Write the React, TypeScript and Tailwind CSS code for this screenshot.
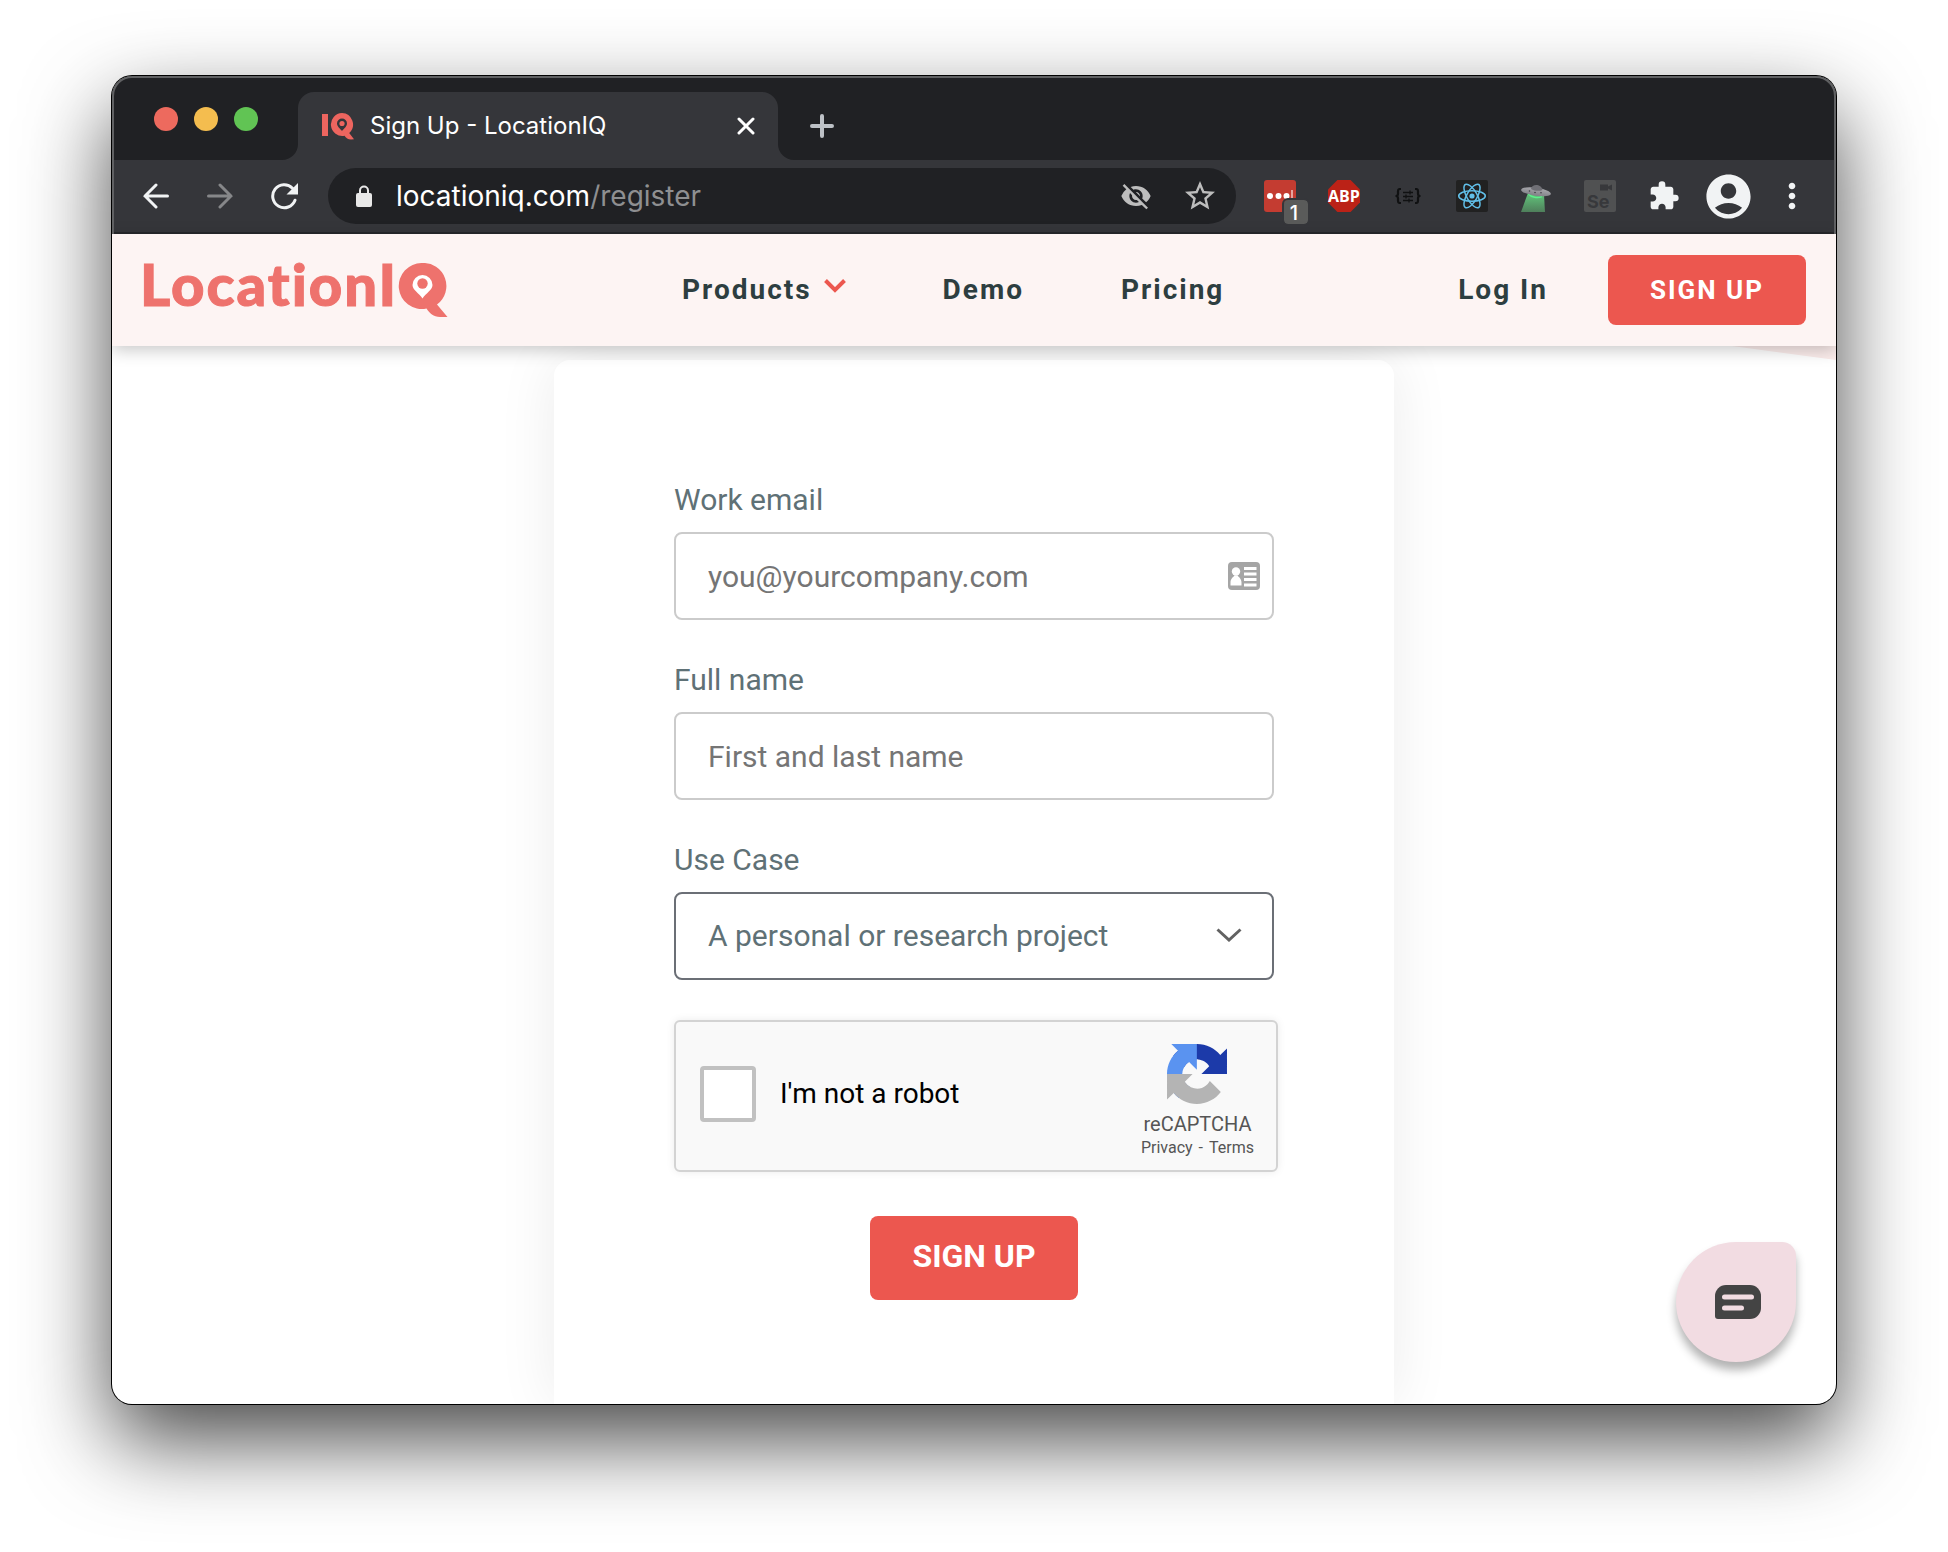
import React from "react";
import {
  MdVisibilityOff,
  MdStarBorder,
  MdExtension,
  MdAccountCircle,
  MdMoreVert,
} from "react-icons/md";

function TrafficLights() {
  return (
    <div className="flex gap-4 pl-[42px] pt-[31px]">
      <button aria-label="Close window" className="h-6 w-6 rounded-full bg-[#ed6a5e]" />
      <button aria-label="Minimize window" className="h-6 w-6 rounded-full bg-[#f4bd4f]" />
      <button aria-label="Zoom window" className="h-6 w-6 rounded-full bg-[#61c454]" />
    </div>
  );
}

function IQMark() {
  return (
    <svg viewBox="0 0 32 27" className="h-[27px] w-8 shrink-0" aria-hidden="true">
      <rect x="0" y="1" width="6" height="22" fill="#ed655f" />
      <path
        fill="#ed655f"
        fillRule="evenodd"
        d="M20 0a11.500 11.500 0 1 0 2.500 22.800c1.500 2.200 3.500 3.700 6.500 3.700l3-.3-4.800-6.200A11.500 11.500 0 0 0 20 0Zm0 5.600a5 5 0 0 1 5 5c0 3-3 5-5 7.400-2-2.400-5-4.400-5-7.400a5 5 0 0 1 5-5Z"
      />
      <circle cx="20" cy="10.500" r="2.600" fill="#ed655f" />
    </svg>
  );
}

function TabFoot({ side }: { side: "left" | "right" }) {
  return (
    <svg
      viewBox="0 0 16 16"
      aria-hidden="true"
      className={
        side === "left"
          ? "absolute bottom-0 right-full h-4 w-4"
          : "absolute bottom-0 left-full h-4 w-4 -scale-x-100"
      }
    >
      <path d="M16 0v16H0A16 16 0 0 0 16 0Z" fill="#35363a" />
    </svg>
  );
}

function TabStrip() {
  return (
    <div className="flex h-[84px] bg-[#202124]">
      <TrafficLights />
      <div className="relative ml-10 mt-4 flex w-[480px] items-center rounded-t-2xl bg-[#35363a] pl-6 pr-5">
        <TabFoot side="left" />
        <IQMark />
        <span className="ml-4 font-[Inter] text-2xl text-white">Sign Up - LocationIQ</span>
        <button aria-label="Close tab" className="ml-auto flex h-6 w-6 items-center justify-center">
          <svg viewBox="0 0 18 18" className="h-[18px] w-[18px]" aria-hidden="true">
            <path d="M2 2l14 14M16 2L2 16" stroke="#fff" strokeWidth="3" strokeLinecap="round" />
          </svg>
        </button>
        <TabFoot side="right" />
      </div>
      <button aria-label="New tab" className="ml-8 mt-[38px] h-6 w-6">
        <svg viewBox="0 0 24 24" aria-hidden="true">
          <path d="M12 2v20M2 12h20" stroke="#bdc1c6" strokeWidth="4" strokeLinecap="round" />
        </svg>
      </button>
    </div>
  );
}

function ToolButton({ label, children }: { label: string; children: React.ReactNode }) {
  return (
    <button aria-label={label} className="relative flex h-14 w-16 shrink-0 items-center justify-center">
      {children}
    </button>
  );
}

function UfoIcon() {
  return (
    <svg viewBox="0 0 32 32" className="h-8 w-8" aria-hidden="true">
      <defs>
        <linearGradient id="beam" x1="0" y1="0" x2="0" y2="1">
          <stop offset="0" stopColor="#62c77c" />
          <stop offset="1" stopColor="#4f7f5b" />
        </linearGradient>
        <linearGradient id="hull" x1="0" y1="0" x2="0" y2="1">
          <stop offset="0" stopColor="#a9a9ae" />
          <stop offset="1" stopColor="#808086" />
        </linearGradient>
      </defs>
      <path d="M8 13L1 32h24l-1-17z" fill="url(#beam)" />
      <path d="M8.500 14c3 3.500 9 4.500 13.500 2.500" fill="none" stroke="#5df08a" strokeWidth="1.500" />
      <ellipse cx="16" cy="11.800" rx="15" ry="4" transform="rotate(8 16 11.800)" fill="url(#hull)" />
      <path d="M11 9c.6-5.500 10.500-5.500 11.500 1-3 1.500-8.500 1-11.500-1Z" fill="#6f6f75" />
      <circle cx="9.500" cy="11" r=".8" fill="#3e3e42" />
      <circle cx="15" cy="12.500" r=".8" fill="#3e3e42" />
      <circle cx="21" cy="12.800" r=".8" fill="#3e3e42" />
    </svg>
  );
}

function ReactAtom() {
  return (
    <svg viewBox="0 0 32 32" className="h-8 w-8" aria-hidden="true">
      <rect width="32" height="32" rx="2" fill="#212121" />
      <g fill="none" stroke="#61bfe8" strokeWidth="1.500">
        <ellipse cx="16" cy="16" rx="13.300" ry="5.200" />
        <ellipse cx="16" cy="16" rx="13.300" ry="5.200" transform="rotate(60 16 16)" />
        <ellipse cx="16" cy="16" rx="13.300" ry="5.200" transform="rotate(120 16 16)" />
      </g>
      <circle cx="16" cy="16" r="2.600" fill="#61bfe8" />
    </svg>
  );
}

function Toolbar() {
  return (
    <div className="flex h-[74px] items-center border-b-2 border-[#27282b] bg-[#35363a] px-3">
      <ToolButton label="Back">
        <svg viewBox="0 0 26 26" className="h-[26px] w-[26px]" aria-hidden="true">
          <path d="M24.500 13H2M13 2L2 13l11 11" fill="none" stroke="#f1f3f4" strokeWidth="3" strokeLinecap="round" />
        </svg>
      </ToolButton>
      <ToolButton label="Forward">
        <svg viewBox="0 0 26 26" className="h-[26px] w-[26px]" aria-hidden="true">
          <path d="M1.500 13H24M13 2l11 11-11 11" fill="none" stroke="#868789" strokeWidth="3" strokeLinecap="round" />
        </svg>
      </ToolButton>
      <ToolButton label="Reload">
        <svg viewBox="0 0 28 28" className="h-7 w-7" aria-hidden="true">
          <path d="M25 18.200A11.500 11.500 0 1 1 22.500 6.200" fill="none" stroke="#f1f3f4" strokeWidth="3" strokeLinecap="round" />
          <path d="M28 1v11.500H16.500z" fill="#f1f3f4" />
        </svg>
      </ToolButton>
      <div className="mx-3 flex h-14 min-w-0 flex-1 items-center rounded-full bg-[#202124] pl-7 pr-1">
        <svg viewBox="0 0 16 22" className="h-[22px] w-4 shrink-0" aria-hidden="true">
          <rect x="0" y="8" width="16" height="14" rx="2" fill="#e8e8e8" />
          <path d="M4 9V5.500a4 4 0 0 1 8 0V9" fill="none" stroke="#e8e8e8" strokeWidth="2" />
        </svg>
        <div className="ml-6 flex-1 whitespace-nowrap font-[Inter] text-[28px] leading-8 text-white">
          locationiq.com<span className="text-[#8e8f91]">/register</span>
        </div>
        <ToolButton label="Third-party cookies blocked">
          <MdVisibilityOff className="h-8 w-8 text-[#bdbdbd]" />
        </ToolButton>
        <ToolButton label="Bookmark this page">
          <MdStarBorder className="h-9 w-9 text-[#bdbdbd]" />
        </ToolButton>
      </div>
      <ToolButton label="Password manager">
        <svg viewBox="0 0 32 32" className="h-8 w-8" aria-hidden="true">
          <rect width="32" height="32" rx="3" fill="#c43c31" />
          <circle cx="6" cy="16" r="3" fill="#fff" />
          <circle cx="14.500" cy="16" r="3" fill="#fff" />
          <circle cx="22.500" cy="16" r="3" fill="#fff" />
          <rect x="27" y="10" width="2" height="12" fill="#e6a49f" />
        </svg>
        <span className="absolute bottom-0 right-1 flex h-6 w-6 items-center justify-center rounded-sm bg-[#5a5b5a] pr-1 pt-0.5 font-[Inter] text-xl font-medium text-white outline-2 outline-[#35363a]">
          1
        </span>
      </ToolButton>
      <ToolButton label="Ad blocker">
        <svg viewBox="0 0 32 32" className="h-8 w-8" aria-hidden="true">
          <path d="M9.400 0h13.200L32 9.400v13.200L22.600 32H9.400L0 22.600V9.400z" fill="#bb2217" />
        </svg>
        <span className="absolute font-[Open_Sans] text-base font-bold text-white">ABP</span>
      </ToolButton>
      <ToolButton label="Request editor">
        <svg viewBox="0 0 26 16" className="h-4 w-[26px]" aria-hidden="true">
          <g fill="none" stroke="#101112" strokeWidth="2.200">
            <path d="M6 1H5a2 2 0 0 0-2 2v3q0 2-2.500 2Q3 8 3 10v3a2 2 0 0 0 2 2h1" />
            <path d="M20 1h1a2 2 0 0 1 2 2v3q0 2 2.500 2-2.500 0-2.500 2v3a2 2 0 0 1-2 2h-1" />
          </g>
          <path d="M8 4.500h10M8 8.500h10M8 12.500h10M15 2.500v4M11 6.500v4M14 10.500v4" stroke="#101112" strokeWidth="1.300" />
        </svg>
      </ToolButton>
      <ToolButton label="React developer tools">
        <ReactAtom />
      </ToolButton>
      <ToolButton label="Abduction">
        <UfoIcon />
      </ToolButton>
      <ToolButton label="Selenium IDE">
        <span className="relative h-8 w-8 rounded-xs bg-[#505152]">
          <span className="absolute bottom-0 left-[3px] font-[Inter] text-lg font-bold leading-5 text-[#37383b]">
            Se
          </span>
          <svg viewBox="0 0 12 6" className="absolute right-1 top-1 h-[7px] w-3" aria-hidden="true">
            <path d="M0 0h8v2l4-2v6L8 4v2H0z" fill="#37383b" />
          </svg>
        </span>
      </ToolButton>
      <ToolButton label="Extensions">
        <MdExtension className="h-8 w-8 text-[#f1f3f4]" />
      </ToolButton>
      <ToolButton label="Profile">
        <MdAccountCircle className="h-[53px] w-[53px] text-[#f1f3f4]" />
      </ToolButton>
      <ToolButton label="Menu">
        <MdMoreVert className="h-10 w-10 text-[#f1f3f4]" />
      </ToolButton>
    </div>
  );
}

function Logo() {
  return (
    <a href="#home" aria-label="LocationIQ" className="flex items-center">
      <span className="pb-3 font-['Lato_Black',Lato,sans-serif] text-[58px] font-black leading-[72px] text-[#ee726d] [-webkit-text-stroke:1px_#ee726d]">
        LocationI
      </span>
      <svg viewBox="0 0 50 54" className="h-[54px] w-[50px]" aria-hidden="true">
        <path
          fill="#ee726d"
          d="M24 0a23 23 0 1 0 4.500 45.500C31.500 50 35.500 54 42 54h7.500L39 41.500A23 23 0 0 0 24 0Z"
        />
        <path fill="#fff" d="M24.500 12a10 10 0 0 1 10 10c0 5-6.500 8-10 13.500C21 30 14.500 27 14.500 22a10 10 0 0 1 10-10Z" />
        <circle cx="24.500" cy="20.500" r="5.200" fill="#ee726d" />
      </svg>
    </a>
  );
}

function SiteHeader() {
  return (
    <header className="relative z-10 flex h-28 items-center justify-between bg-[#fdf4f3] pl-7 pr-[30px] font-[Roboto] text-[28px] font-bold tracking-[2px] text-[#2d3e40] shadow-[0_4px_16px_rgba(0,0,0,0.22)]">
      <Logo />
      <nav className="flex items-center gap-[97px]">
        <button className="flex items-center gap-3 tracking-[2px]">
          Products
          <svg viewBox="0 0 22 14" className="mb-2 h-3.5 w-[22px]" aria-hidden="true">
            <path d="M1.500 1.500L11 11l9.500-9.500" fill="none" stroke="#ec574f" strokeWidth="4" />
          </svg>
        </button>
        <a href="#demo">Demo</a>
        <a href="#pricing">Pricing</a>
      </nav>
      <div className="flex items-center gap-[60px]">
        <a href="#login">Log In</a>
        <a
          href="#signup"
          className="flex h-[70px] w-[198px] items-center justify-center rounded-lg bg-[#ec574f] text-[26px] text-white"
        >
          SIGN UP
        </a>
      </div>
    </header>
  );
}

function Recaptcha() {
  return (
    <div className="-mr-1 flex h-[152px] items-center rounded-md border-2 border-[#d3d3d3] bg-[#f9f9f9] pl-6 pr-[22px] shadow-[0_0_8px_rgba(0,0,0,0.08)]">
      <div className="flex flex-1 items-center pb-1">
        <input
          id="robot"
          type="checkbox"
          className="h-14 w-14 appearance-none rounded-sm border-4 border-[#c1c1c1] bg-white"
        />
        <label htmlFor="robot" className="ml-6 text-[28px] text-black">
          I'm not a robot
        </label>
      </div>
      <div className="flex flex-col items-center pt-3 text-[#555]">
        <svg viewBox="0 0 64 64" className="h-[60px] w-[60px]" aria-hidden="true">
          <path
            d="M64 31.955l-.033-1.370V4.687l-7.160 7.160C50.948 4.674 42.033.093 32.050.093c-10.400 0-19.622 4.960-25.458 12.640l11.736 11.860a15.550 15.550 0 0 1 4.754-5.334c2.050-1.600 4.952-2.906 8.968-2.906.485 0 .860.057 1.135.163 4.976.393 9.288 3.140 11.828 7.124l-8.307 8.307L64 31.953"
            fill="#1c3aa9"
          />
          <path
            d="M31.862.094l-1.370.033H4.594l7.160 7.160C4.580 13.147 0 22.060 0 32.046c0 10.400 4.960 19.622 12.640 25.458L24.500 45.768a15.550 15.550 0 0 1-5.334-4.754c-1.600-2.050-2.906-4.952-2.906-8.968 0-.485.057-.860.163-1.135.393-4.976 3.140-9.288 7.124-11.828l8.307 8.307L31.860.095"
            fill="#5a93f0"
          />
          <path
            d="M.001 32.045l.033 1.370v25.898l7.160-7.160c5.860 7.173 14.774 11.754 24.760 11.754 10.400 0 19.622-4.960 25.458-12.640l-11.736-11.860a15.550 15.550 0 0 1-4.754 5.334c-2.050 1.600-4.952 2.906-8.968 2.906-.485 0-.860-.057-1.135-.163-4.976-.393-9.288-3.140-11.828-7.124l8.307-8.307c-10.522.040-22.400.066-27.295-.005"
            fill="#b4b4b4"
          />
        </svg>
        <div className="mt-2 text-xl leading-6">reCAPTCHA</div>
        <div className="flex gap-1.5 text-base leading-6">
          <a href="#privacy">Privacy</a>
          <span>-</span>
          <a href="#terms">Terms</a>
        </div>
      </div>
    </div>
  );
}

const fieldClass =
  "h-[88px] w-full rounded-lg border-2 bg-white px-8 text-[30px] outline-none placeholder:text-[#757575]";

function SignUpForm() {
  return (
    <form
      className="mx-auto flex w-[840px] flex-1 flex-col rounded-t-2xl bg-white px-[120px] pt-[120px] font-[Roboto] text-[30px] leading-10 text-[#5f7176] shadow-[0_0_60px_rgba(0,0,0,0.08)]"
      onSubmit={(e) => e.preventDefault()}
    >
      <label htmlFor="email" className="mb-3">
        Work email
      </label>
      <div className="relative">
        <input
          id="email"
          type="email"
          placeholder="you@yourcompany.com"
          className={`${fieldClass} border-[#cbcbcb]`}
        />
        <svg viewBox="0 0 32 28" className="absolute right-3.5 top-[30px] h-7 w-8" aria-hidden="true">
          <rect width="32" height="28" rx="4" fill="#a5a5a5" />
          <circle cx="8" cy="9.500" r="4.200" fill="#fff" />
          <path d="M2.500 23.500v-3c0-4 3-5.500 4-7h3c1 1.500 4 3 4 7v3z" fill="#fff" />
          <path d="M16 6.500h12.500M16 12h12.500M16 17.500h12.500M16 23h12.500" stroke="#fff" strokeWidth="3" />
        </svg>
      </div>
      <label htmlFor="name" className="mb-3 mt-10">
        Full name
      </label>
      <input id="name" placeholder="First and last name" className={`${fieldClass} border-[#cbcbcb]`} />
      <label htmlFor="usecase" className="mb-3 mt-10">
        Use Case
      </label>
      <div className="relative mb-10">
        <select id="usecase" className={`${fieldClass} appearance-none border-[#6b6f76]`}>
          <option>A personal or research project</option>
        </select>
        <svg
          viewBox="0 0 26 14"
          className="pointer-events-none absolute right-8 top-9 h-3.5 w-[26px]"
          aria-hidden="true"
        >
          <path d="M1.500 1.500L13 12 24.500 1.500" fill="none" stroke="#626262" strokeWidth="3" />
        </svg>
      </div>
      <Recaptcha />
      <button className="mx-auto mt-11 h-[84px] w-[208px] rounded-lg bg-[#ec574f] pb-1 text-[32px] font-bold text-white">
        SIGN UP
      </button>
    </form>
  );
}

export default function App() {
  return (
    <div className="flex min-h-screen bg-white px-28 pb-[148px] pt-[76px]">
      <div className="relative flex min-w-0 flex-1 flex-col rounded-[20px] bg-white shadow-[0_0_0_1px_#000,0_36px_86px_rgba(0,0,0,0.72)]">
        <div className="flex flex-1 flex-col overflow-hidden rounded-[20px]">
          <div className="relative">
            <TabStrip />
            <Toolbar />
            <div className="pointer-events-none absolute inset-0 rounded-t-[20px] border-x-2 border-t-2 border-[#606163]" />
          </div>
          <SiteHeader />
          <main className="relative flex flex-1 flex-col pt-3.5">
            <svg viewBox="0 0 104 14" className="absolute right-0 top-0 h-3.5 w-[104px]" aria-hidden="true">
              <path d="M0 0h104v14z" fill="#fbeceb" />
            </svg>
            <SignUpForm />
            <button
              aria-label="Open chat"
              className="absolute bottom-[42px] right-10 flex h-[120px] w-[120px] items-center justify-center rounded-[60px_14px_60px_60px] bg-[#f2dce2] pl-1 shadow-[0_8px_10px_rgba(0,0,0,0.3)]"
            >
              <svg viewBox="0 0 46 34" className="h-[34px] w-[46px]" aria-hidden="true">
                <path
                  d="M11 0h24a11 11 0 0 1 11 11v12a11 11 0 0 1-11 11H3a3 3 0 0 1-3-3V11A11 11 0 0 1 11 0Z"
                  fill="#444"
                />
                <path d="M9.500 12h27M9.500 23h17" stroke="#f2dce2" strokeWidth="5" strokeLinecap="round" />
              </svg>
            </button>
          </main>
        </div>
      </div>
    </div>
  );
}
